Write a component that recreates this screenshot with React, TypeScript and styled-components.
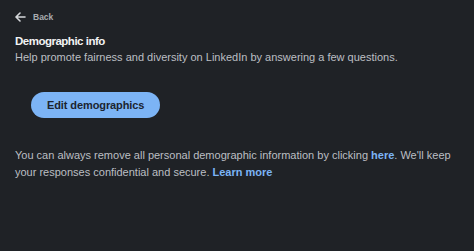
import React from "react";
import styled, { createGlobalStyle } from "styled-components";

const Global = createGlobalStyle`
  html, body { margin: 0; padding: 0; background: #1f2226; }
  body { font-family: "Liberation Sans", Arial, sans-serif; -webkit-font-smoothing: antialiased; }
`;

const Page = styled.div`
  width: 474px;
  height: 251px;
  box-sizing: border-box;
  background: #1f2226;
  padding: 10px 15px 0 15px;
  display: flex;
  flex-direction: column;
`;

const BackLink = styled.a`
  display: flex;
  align-items: center;
  gap: 7px;
  color: #a8abaf;
  font-size: 8.5px;
  font-weight: 700;
  text-decoration: none;
  height: 14px;
`;

const Title = styled.h1`
  margin: 9px 0 0 0;
  font-size: 11.5px;
  letter-spacing: -0.5px;
  line-height: 16px;
  font-weight: 700;
  color: #f2f3f4;
`;

const Subtitle = styled.p`
  margin: 0;
  font-size: 11px;
  line-height: 16px;
  color: #bcbfc3;
`;

const ButtonRow = styled.div`
  display: flex;
  padding: 27px 0 0 16px;
`;

const PillButton = styled.button`
  height: 26px;
  padding: 0 16px;
  border: none;
  border-radius: 13px;
  background: #7cb4f5;
  color: #1b2430;
  font-family: inherit;
  font-size: 11px;
  letter-spacing: -0.1px;
  font-weight: 700;
  cursor: pointer;
`;

const Note = styled.p`
  margin: 29px 0 0 0;
  max-width: 440px;
  font-size: 11px;
  line-height: 17px;
  color: #bcbfc3;
`;

const Link = styled.a`
  color: #7cb4f5;
  font-weight: 700;
  text-decoration: none;
`;

export default function App() {
  return (
    <>
      <Global />
      <Page>
        <BackLink href="#">
          <svg width="11" height="10" viewBox="0 0 11 10" fill="none">
            <path d="M10 5H1.5M5 1L1 5l4 4" stroke="#d5d7da" strokeWidth="1.6" strokeLinecap="round" strokeLinejoin="round" />
          </svg>
          Back
        </BackLink>
        <Title>Demographic info</Title>
        <Subtitle>Help promote fairness and diversity on LinkedIn by answering a few questions.</Subtitle>
        <ButtonRow>
          <PillButton>Edit demographics</PillButton>
        </ButtonRow>
        <Note>
          You can always remove all personal demographic information by clicking <Link href="#">here</Link>. We'll keep your responses confidential and secure. <Link href="#">Learn more</Link>
        </Note>
      </Page>
    </>
  );
}
